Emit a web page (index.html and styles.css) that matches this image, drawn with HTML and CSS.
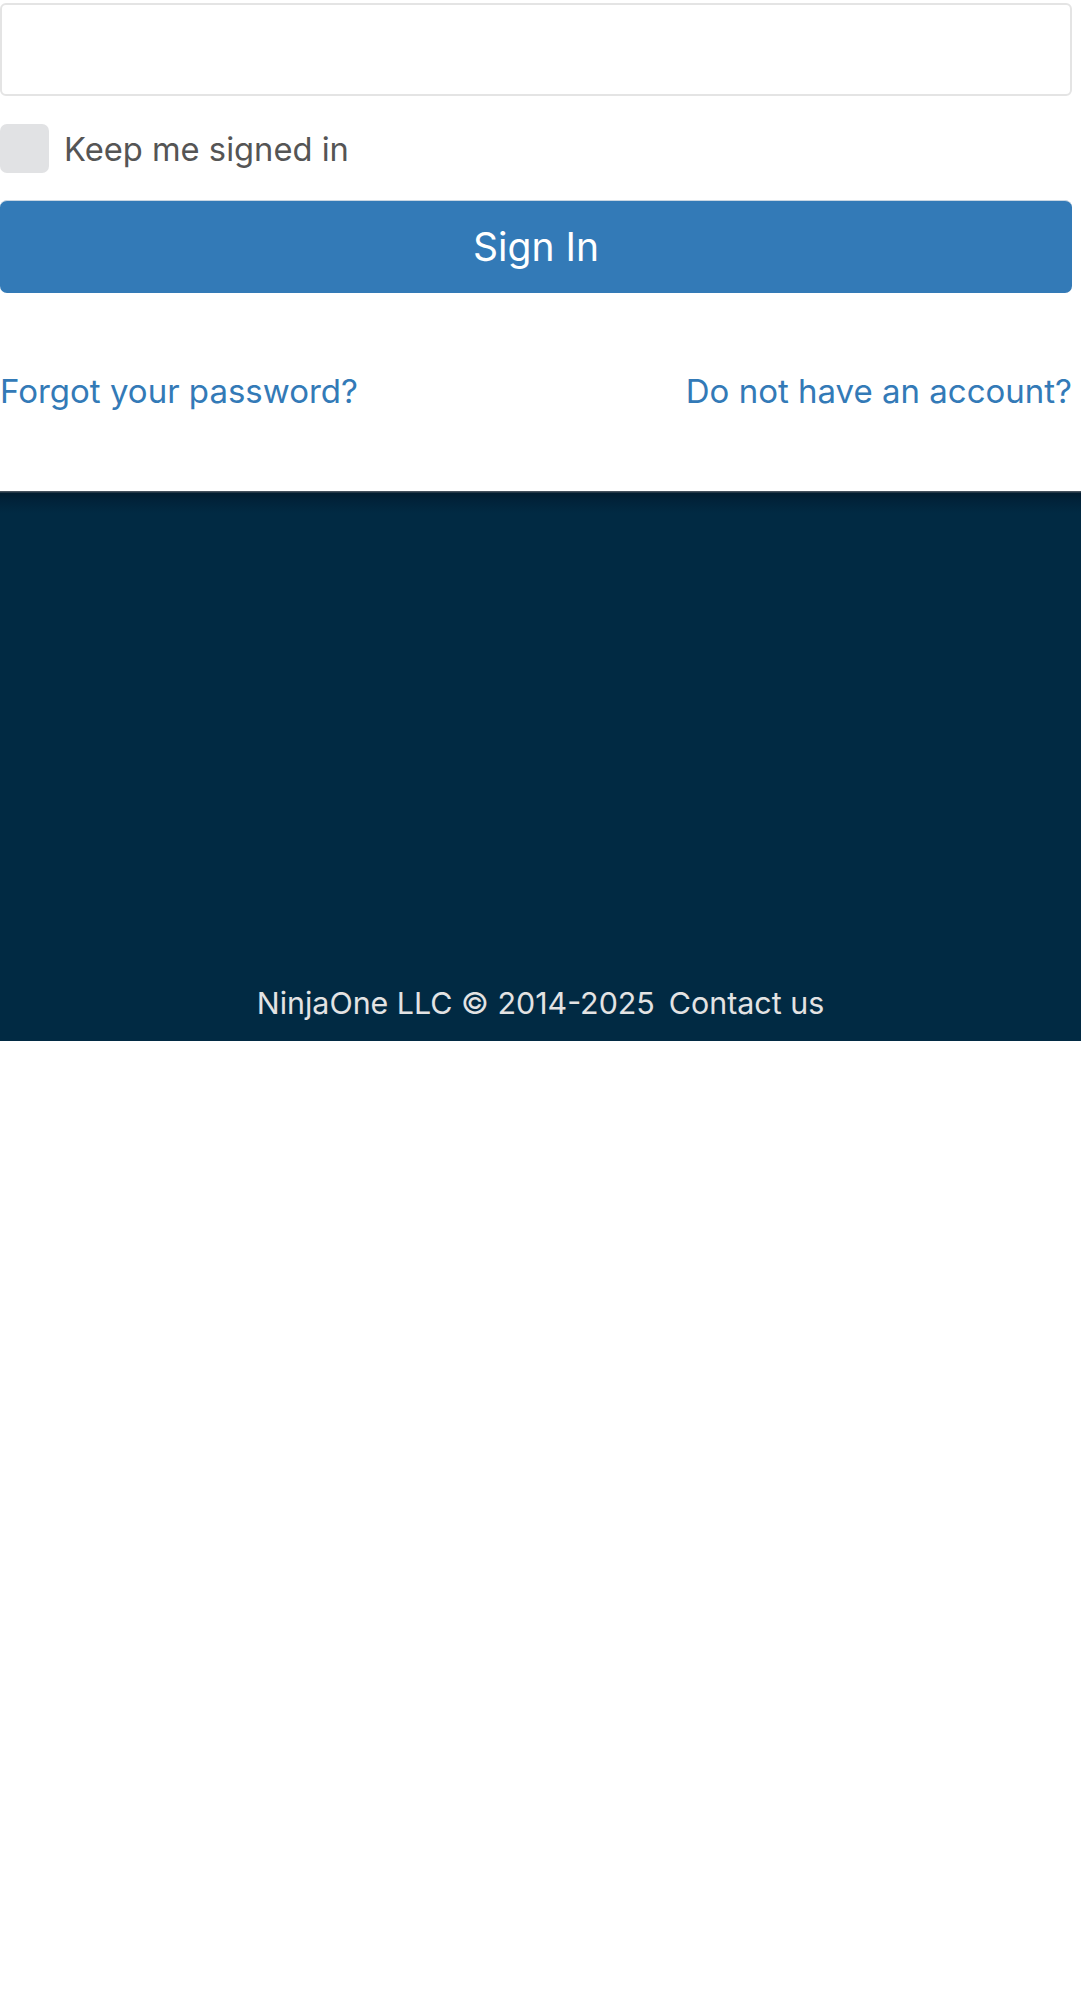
FILE: index.html
```html
<!DOCTYPE html>
<html lang="en">
<head>
<meta charset="utf-8">
<title>Sign In</title>
<link rel="stylesheet" href="styles.css">
</head>
<body>
<main class="login">
  <input class="field" type="password" aria-label="Password">
  <label class="keep">
    <span class="box"></span>
    <span class="keep-text">Keep me signed in</span>
  </label>
  <button class="signin" type="button">Sign In</button>
  <div class="links">
    <a href="#" class="link">Forgot your password?</a>
    <a href="#" class="link">Do not have an account?</a>
  </div>
</main>
<footer class="footer">
  <div class="footer-text">
    <span>NinjaOne LLC © 2014-2025</span>
    <a href="#" class="contact">Contact us</a>
  </div>
</footer>
</body>
</html>
```

FILE: styles.css
```css
html, body {
  margin: 0;
  padding: 0;
  background: #ffffff;
}

body {
  font-family: Inter, "Noto Sans", "Liberation Sans", sans-serif;
  width: 1081px;
}

.login {
  width: 1072px;
  padding-top: 3px;
  display: flex;
  flex-direction: column;
}

.field {
  box-sizing: border-box;
  display: block;
  width: 1072px;
  height: 93px;
  margin: 0;
  border: 2px solid #e4e4e4;
  border-radius: 6px;
  background: #ffffff;
  outline: none;
}

.keep {
  display: flex;
  align-items: center;
  gap: 15px;
  margin-top: 28px;
  height: 49px;
}

.box {
  width: 49px;
  height: 49px;
  border-radius: 7px;
  background: #e1e2e4;
  flex: none;
}

.keep-text {
  font-size: 32.7px;
  color: #555555;
  line-height: 1;
  padding-top: 1px;
}

.signin {
  box-sizing: border-box;
  margin-top: 27px;
  width: 1072px;
  height: 93px;
  border: none;
  border-top: 1px solid #c9d6e2;
  border-radius: 7px;
  background: #337ab7;
  color: #ffffff;
  font-family: Inter, "Noto Sans", "Liberation Sans", sans-serif;
  font-size: 39px;
  padding: 0 0 2px 0;
}

.links {
  display: flex;
  justify-content: space-between;
  margin-top: 74px;
  line-height: 48px;
}

.link {
  color: #337ab7;
  font-size: 33px;
  text-decoration: none;
}

.footer {
  margin-top: 76px;
  height: 550px;
  background: linear-gradient(to bottom, #46525d 0, #46525d 1px, #011c2f 2px, #01233a 10px, #012a43 22px, #012a43 100%);
  display: flex;
  flex-direction: column;
  justify-content: flex-end;
  align-items: center;
}

.footer-text {
  display: flex;
  gap: 14px;
  font-size: 30.4px;
  line-height: 40px;
  color: #e3e3e3;
  padding-bottom: 18px;
}

.contact {
  color: #e3e3e3;
  text-decoration: none;
}
```
